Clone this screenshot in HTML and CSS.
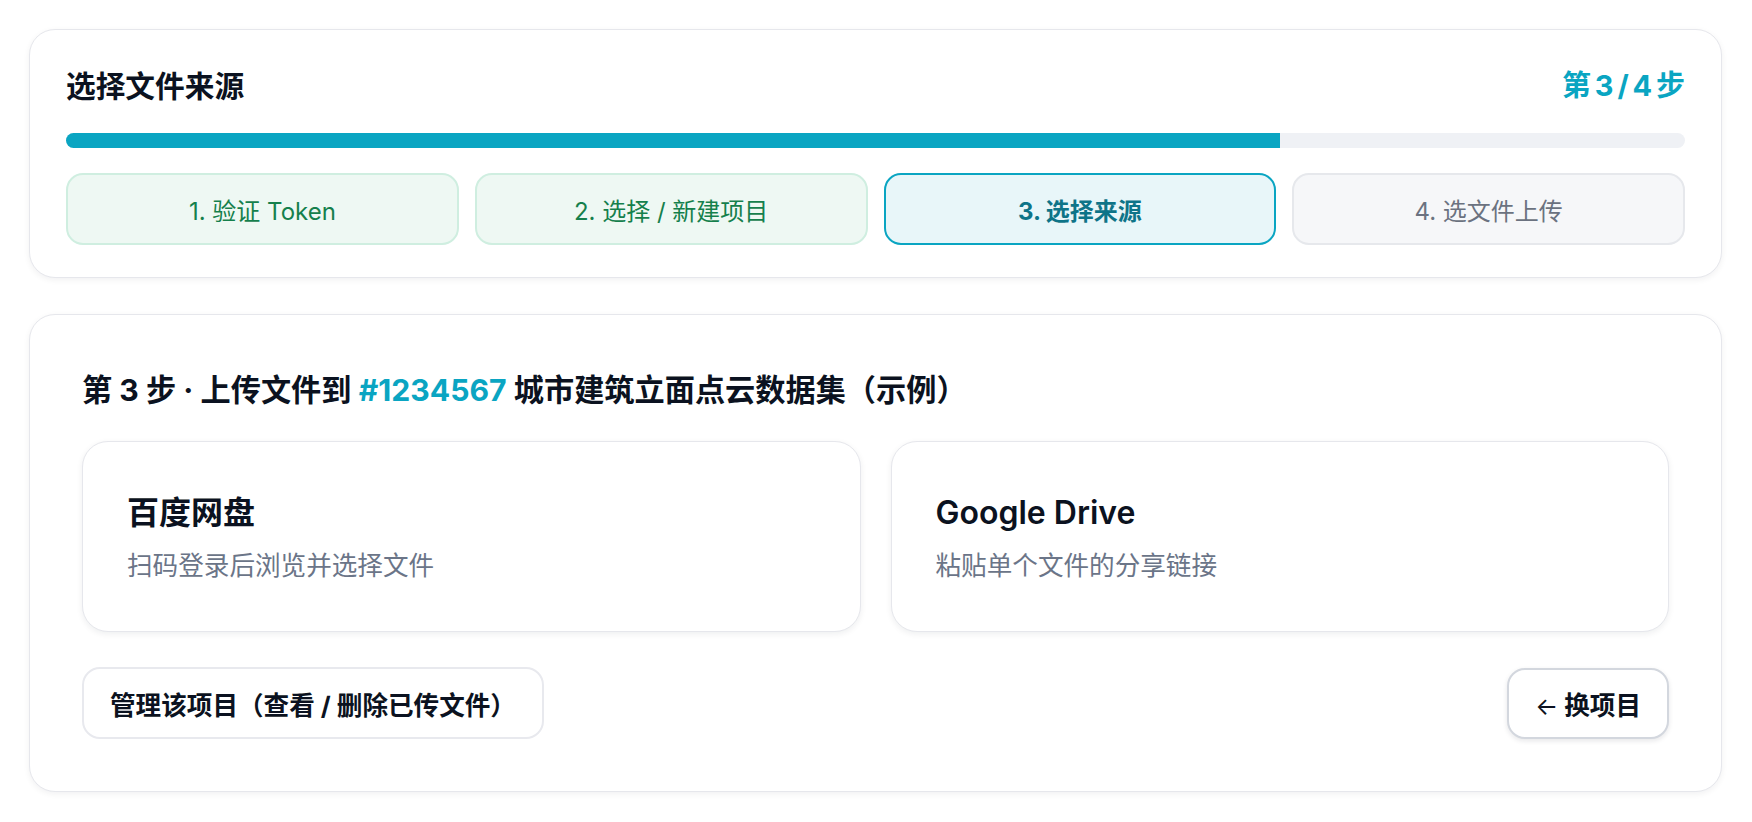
FILE: index.html
```html
<!DOCTYPE html>
<html lang="zh-CN">
<head>
<meta charset="utf-8">
<title>选择文件来源</title>
<link rel="stylesheet" href="styles.css">
</head>
<body>
<div class="page">
  <section class="card progress-card">
    <div class="progress-head">
      <h1 class="progress-title">选择文件来源</h1>
      <div class="progress-count">第 3 / 4 步</div>
    </div>
    <div class="bar"><div class="bar-fill" style="width:75%"></div></div>
    <div class="steps">
      <div class="step step-done">1. 验证 Token</div>
      <div class="step step-done">2. 选择 / 新建项目</div>
      <div class="step step-current">3. 选择来源</div>
      <div class="step step-todo">4. 选文件上传</div>
    </div>
  </section>

  <section class="card main-card">
    <h2 class="main-title">第 3 步 · 上传文件到 <span class="hash">#1234567</span> 城市建筑立面点云数据集（示例）</h2>
    <div class="sources">
      <div class="source">
        <div class="source-name">百度网盘</div>
        <div class="source-desc">扫码登录后浏览并选择文件</div>
      </div>
      <div class="source">
        <div class="source-name">Google Drive</div>
        <div class="source-desc">粘贴单个文件的分享链接</div>
      </div>
    </div>
    <div class="actions">
      <button class="btn btn-manage">管理该项目（查看 / 删除已传文件）</button>
      <button class="btn btn-back"><span class="arrow">←</span> 换项目</button>
    </div>
  </section>
</div>
</body>
</html>
```

FILE: styles.css
```css
* { box-sizing: border-box; }

html, body {
  margin: 0;
  background: #ffffff;
}

body {
  font-family: Inter, "Noto Sans CJK SC", "Noto Sans", sans-serif;
  color: #0b1220;
}

.page {
  padding: 29px 30px 30px 29px;
  display: flex;
  flex-direction: column;
  gap: 36px;
}

.card {
  background: #ffffff;
  border: 1px solid #e6e7ec;
  border-radius: 26px;
  box-shadow: 0 2px 6px rgba(15, 23, 42, 0.06);
}

.progress-card {
  padding: 36px 36px 32px;
}

.progress-head {
  display: flex;
  justify-content: space-between;
  align-items: center;
  height: 40px;
}

.progress-title {
  margin: 0;
  font-size: 29.7px;
  font-weight: 700;
  line-height: 40px;
  color: #0b1220;
}

.progress-count {
  font-size: 29px;
  font-weight: 700;
  line-height: 40px;
  color: #0aa5c2;
  word-spacing: -3px;
}

.bar {
  margin-top: 27px;
  height: 15px;
  border-radius: 8px;
  background: #eff1f5;
  overflow: hidden;
}

.bar-fill {
  height: 100%;
  background: #0aa5c2;
}

.steps {
  margin-top: 25px;
  display: grid;
  grid-template-columns: repeat(4, 1fr);
  gap: 16px;
}

.step {
  height: 72px;
  border-radius: 17px;
  display: flex;
  align-items: center;
  justify-content: center;
  font-size: 24px;
}

.step-done {
  background: #eef8f3;
  border: 2px solid #cfeee0;
  color: #15804c;
}

.step-current {
  background: #e8f6f9;
  border: 2px solid #0aa5c2;
  color: #0e7488;
  font-weight: 700;
}

.step-todo {
  background: #f6f7f9;
  border: 2px solid #e6e8ec;
  color: #6b7280;
}

.main-card {
  padding: 55px 52px 52px;
}

.main-title {
  margin: 0;
  font-size: 30.2px;
  font-weight: 700;
  line-height: 40px;
  color: #0b1220;
}

.hash {
  color: #0aa5c2;
}

.sources {
  margin-top: 31px;
  display: grid;
  grid-template-columns: 1fr 1fr;
  gap: 30px;
}

.source {
  height: 191px;
  padding: 47px 44px 46px;
  border: 1px solid #e6e7ec;
  border-radius: 26px;
  background: #ffffff;
  box-shadow: 0 2px 6px rgba(15, 23, 42, 0.07);
}

.source-name {
  font-size: 32px;
  font-weight: 600;
  line-height: 48px;
  color: #0b1220;
}

.source-desc {
  margin-top: 10px;
  font-size: 25.6px;
  line-height: 38px;
  color: #6b7588;
}

.actions {
  margin-top: 35px;
  display: flex;
  justify-content: space-between;
  align-items: center;
}

.btn {
  font-family: inherit;
  height: 72px;
  padding: 0 26px;
  font-size: 25.6px;
  font-weight: 700;
  color: #0b1220;
  background: #ffffff;
  border-radius: 18px;
  cursor: pointer;
}

.btn-manage {
  border: 2px solid #e8e9ee;
}

.btn-back {
  height: 71px;
  border: 2px solid #d3d7de;
  box-shadow: 0 2px 5px rgba(15, 23, 42, 0.1);
}

.arrow {
  font-weight: 400;
  font-size: 24px;
}
```
